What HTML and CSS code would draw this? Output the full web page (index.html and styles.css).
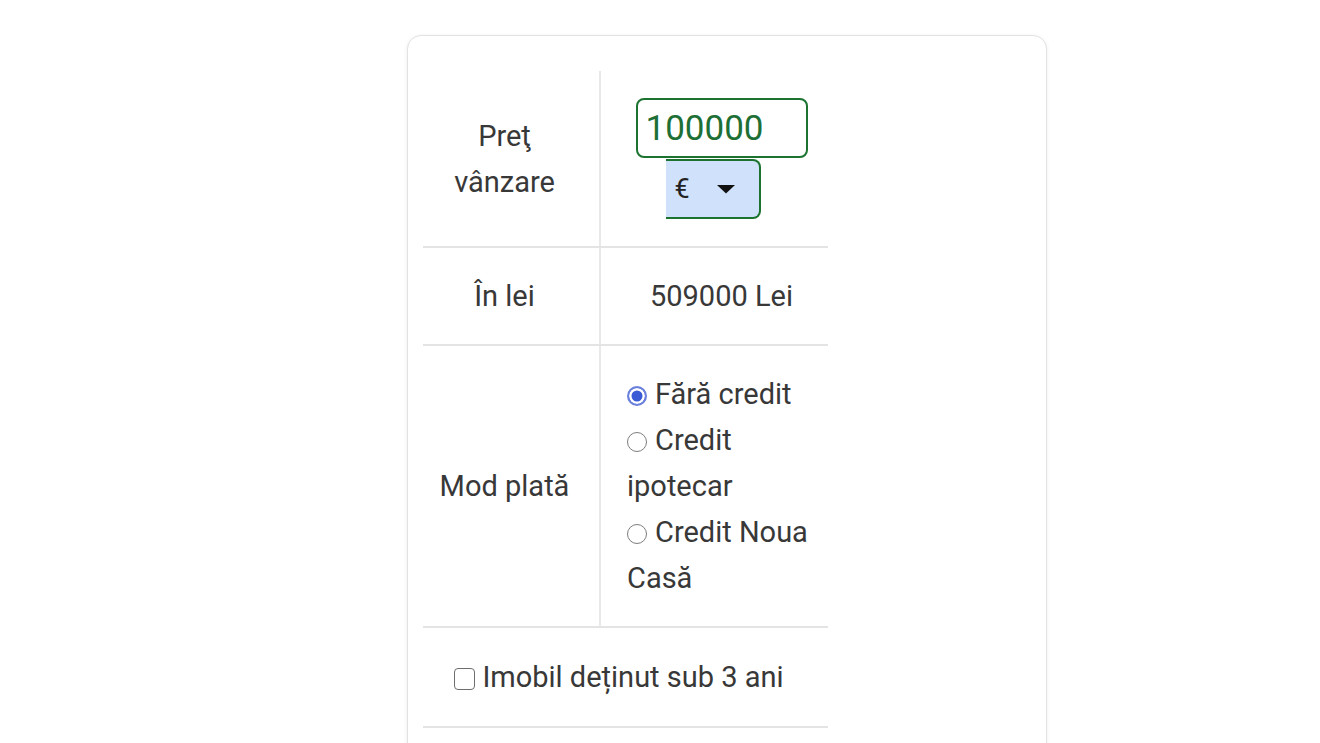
FILE: index.html
```html
<!DOCTYPE html>
<html lang="ro">
<head>
<meta charset="utf-8">
<title>Calculator</title>
<link rel="stylesheet" href="styles.css">
</head>
<body>
<div class="page">
  <div class="card">
    <table class="calc">
      <colgroup><col class="c-label"><col class="c-value"></colgroup>
      <tr class="row-price">
        <td class="label">Preţ vânzare</td>
        <td class="value">
          <div class="price">
            <input class="price-input" type="text" value="100000">
            <div class="currency">
              <span>€</span>
              <svg class="caret" width="20" height="10" viewBox="0 0 20 10"><path d="M1 1h18L10 9.5z" fill="#111"/></svg>
            </div>
          </div>
        </td>
      </tr>
      <tr>
        <td class="label">În lei</td>
        <td class="value">509000 Lei</td>
      </tr>
      <tr>
        <td class="label">Mod plată</td>
        <td class="value left">
          <label class="opt"><input type="radio" name="mod" checked>Fără credit</label>
          <label class="opt"><input type="radio" name="mod">Credit ipotecar</label>
          <label class="opt"><input type="radio" name="mod">Credit Noua Casă</label>
        </td>
      </tr>
      <tr class="row-check">
        <td class="full" colspan="2"><label class="chk"><input type="checkbox">Imobil deținut sub 3 ani</label></td>
      </tr>
      <tr>
        <td class="full" colspan="2">&nbsp;</td>
      </tr>
    </table>
  </div>
</div>
</body>
</html>
```
FILE: styles.css
```css
html, body {
  margin: 0;
  padding: 0;
  background: #fff;
}
body {
  font-family: Roboto, "Liberation Sans", sans-serif;
  color: #383838;
  font-size: 29px;
  line-height: 46px;
}
.page {
  padding: 35px 0 0 407px;
}
.card {
  width: 640px;
  box-sizing: border-box;
  border: 1px solid #e2e2e2;
  border-radius: 14px;
  box-shadow: 0 1px 4px rgba(0, 0, 0, 0.07);
  padding: 35px 15px 40px;
  background: #fff;
}
.calc {
  width: 405px;
  border-collapse: collapse;
  table-layout: fixed;
}
.c-label { width: 177px; }
.c-value { width: 228px; }
.calc td {
  border-bottom: 2px solid #e4e4e4;
  padding-top: 25px;
  padding-bottom: 25px;
  vertical-align: middle;
}
.row-price td {
  padding-top: 26px;
  padding-bottom: 26px;
}
.row-check td {
  padding-top: 26px;
  padding-bottom: 26px;
}
.label {
  text-align: center;
  padding-left: 16px;
  padding-right: 29px;
  border-right: 2px solid #e8e8e8;
}
.value {
  text-align: center;
  padding-left: 26px;
  padding-right: 12px;
}
.value.left {
  text-align: left;
}
.full {
  text-align: center;
  padding-left: 26px;
  padding-right: 39px;
}
.price {
  display: flex;
  flex-direction: column;
  align-items: center;
  gap: 1px;
  margin: 1px 0;
}
.price-input {
  width: 172px;
  height: 60px;
  box-sizing: border-box;
  border: 2px solid #1c7330;
  border-radius: 8px;
  padding: 0 8px;
  font-family: Roboto, "Liberation Sans", sans-serif;
  font-size: 35px;
  color: #1d6f35;
  background: #fff;
  outline: none;
}
.currency {
  width: 95px;
  height: 60px;
  box-sizing: border-box;
  margin-right: 17px;
  background: #cfe1fb;
  border: 2px solid #1c7330;
  border-left: none;
  border-radius: 0 8px 8px 0;
  display: flex;
  align-items: center;
  gap: 26px;
  padding-left: 9px;
  font-size: 27px;
  color: #222;
}
.caret {
  display: block;
}
.opt {
  display: block;
}
.opt input {
  appearance: none;
  -webkit-appearance: none;
  width: 20px;
  height: 20px;
  box-sizing: border-box;
  margin: 0 8px 0 0;
  border: 1.5px solid #7d7d7d;
  border-radius: 50%;
  vertical-align: -2px;
  background: #fff;
}
.opt input:checked {
  border: 2px solid #6a80dc;
  background: #3b5ad6;
  box-shadow: inset 0 0 0 2.5px #fff;
}
.chk input {
  appearance: none;
  -webkit-appearance: none;
  width: 21px;
  height: 22px;
  box-sizing: border-box;
  margin: 0 7px 0 0;
  border: 1.5px solid #6e6e6e;
  border-radius: 4px;
  vertical-align: -3px;
  background: #fff;
}
```
